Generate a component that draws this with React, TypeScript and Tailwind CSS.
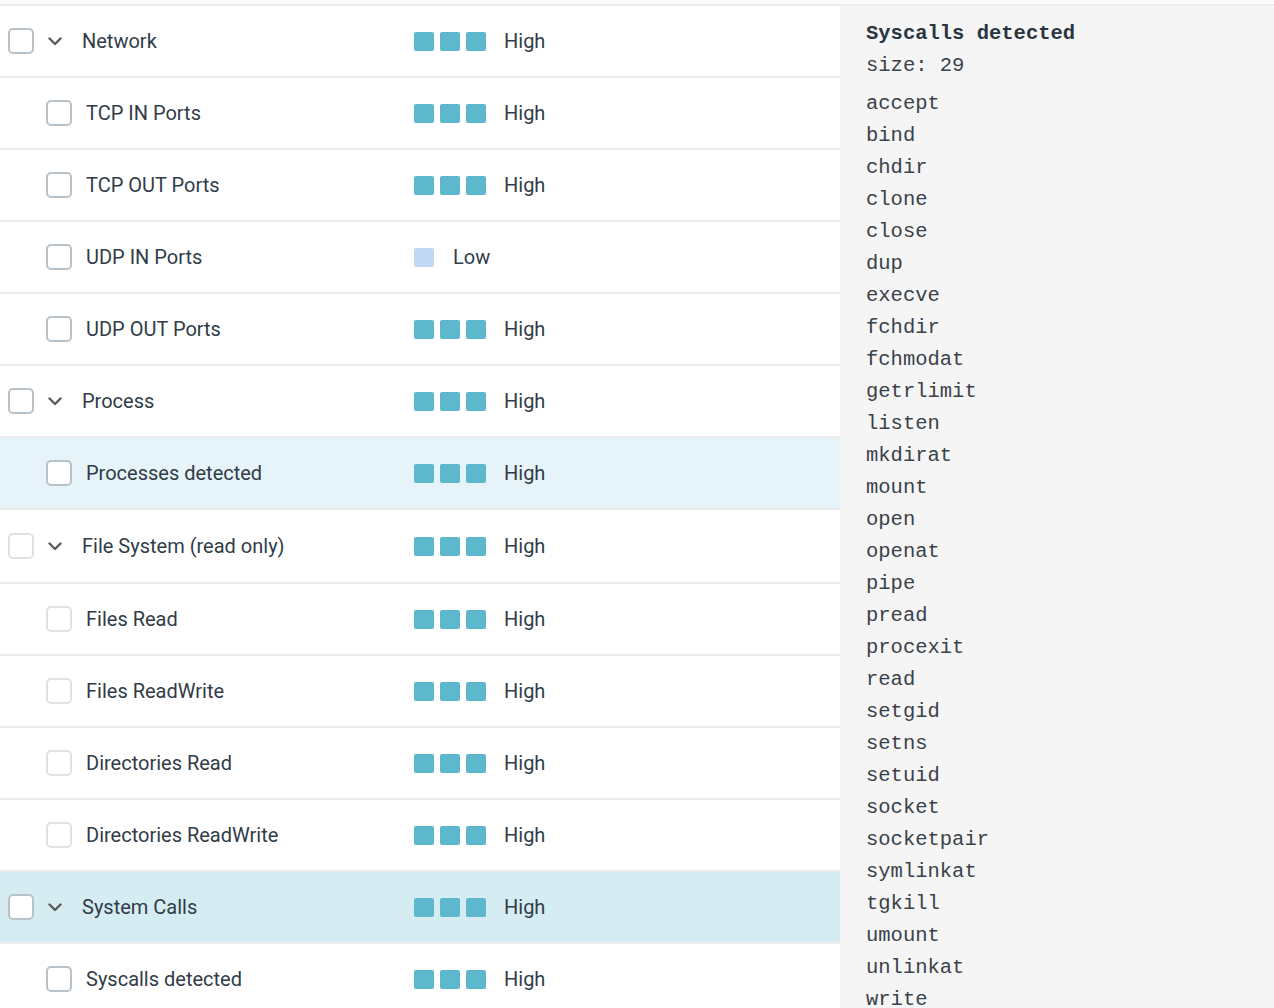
import React from "react";

type Row = {
  name: string;
  level: "High" | "Low";
  parent?: boolean;
  light?: boolean;
  bg?: string;
  tall?: boolean;
};

const rows: Row[] = [
  { name: "Network", level: "High", parent: true },
  { name: "TCP IN Ports", level: "High" },
  { name: "TCP OUT Ports", level: "High" },
  { name: "UDP IN Ports", level: "Low" },
  { name: "UDP OUT Ports", level: "High" },
  { name: "Process", level: "High", parent: true },
  { name: "Processes detected", level: "High", bg: "bg-[#e6f3f8]" },
  { name: "File System (read only)", level: "High", parent: true, light: true, tall: true },
  { name: "Files Read", level: "High", light: true },
  { name: "Files ReadWrite", level: "High", light: true },
  { name: "Directories Read", level: "High", light: true },
  { name: "Directories ReadWrite", level: "High", light: true },
  { name: "System Calls", level: "High", parent: true, bg: "bg-[#d4ecf2]" },
  { name: "Syscalls detected", level: "High" },
];

const syscalls = [
  "accept", "bind", "chdir", "clone", "close", "dup", "execve", "fchdir", "fchmodat",
  "getrlimit", "listen", "mkdirat", "mount", "open", "openat", "pipe", "pread",
  "procexit", "read", "setgid", "setns", "setuid", "socket", "socketpair",
  "symlinkat", "tgkill", "umount", "unlinkat", "write",
];

function Checkbox({ light }: { light?: boolean }) {
  return (
    <div
      className={
        "w-[26px] h-[26px] shrink-0 rounded-[5px] border-2 bg-white " +
        (light ? "border-[#dde2e6]" : "border-[#b7c2ca]")
      }
    />
  );
}

function Chevron() {
  return (
    <svg width="14" height="9" viewBox="0 0 14 9" className="shrink-0">
      <polyline
        points="1.5,1.5 7,7 12.5,1.5"
        fill="none"
        stroke="#5a5a5a"
        strokeWidth="2.4"
        strokeLinecap="round"
        strokeLinejoin="round"
      />
    </svg>
  );
}

function Level({ level }: { level: "High" | "Low" }) {
  if (level === "Low") {
    return (
      <div className="flex items-center">
        <div className="w-[20px] h-[19px] rounded-[2px] bg-[#c2d7f3]" />
        <span className="ml-[19px]">Low</span>
      </div>
    );
  }
  return (
    <div className="flex items-center">
      <div className="flex gap-[6px]">
        <div className="w-[20px] h-[19px] rounded-[2px] bg-[#5db8cd]" />
        <div className="w-[20px] h-[19px] rounded-[2px] bg-[#5db8cd]" />
        <div className="w-[20px] h-[19px] rounded-[2px] bg-[#5db8cd]" />
      </div>
      <span className="ml-[18px]">High</span>
    </div>
  );
}

export default function App() {
  return (
    <div
      className="w-[1274px] h-[1008px] overflow-hidden bg-white text-[#313c48]"
      style={{ fontFamily: "Roboto, 'Liberation Sans', sans-serif" }}
    >
      <div className="h-[4px] bg-[#fafafa]" />
      <div className="h-[2px] bg-[#ececec]" />
      <div className="flex">
        <div className="w-[840px] shrink-0">
          {rows.map((r) => (
            <div key={r.name} className="border-b-2 border-[#ededed]">
              <div
                className={
                  "flex items-center text-[20px] " +
                  (r.tall ? "h-[72px] " : "h-[70px] ") +
                  (r.bg ?? "")
                }
              >
                <div className="w-[414px] shrink-0 flex items-center">
                  {r.parent ? (
                    <>
                      <div className="ml-[8px]">
                        <Checkbox light={r.light} />
                      </div>
                      <div className="ml-[14px]">
                        <Chevron />
                      </div>
                      <span className="ml-[20px]">{r.name}</span>
                    </>
                  ) : (
                    <>
                      <div className="ml-[46px]">
                        <Checkbox light={r.light} />
                      </div>
                      <span className="ml-[14px]">{r.name}</span>
                    </>
                  )}
                </div>
                <Level level={r.level} />
              </div>
            </div>
          ))}
        </div>
        <div
          className="flex-1 bg-[#f5f5f5] pl-[26px] pt-[12px] text-[20.5px] leading-[32px] text-[#3a4249]"
          style={{ fontFamily: "'Liberation Mono', 'DejaVu Sans Mono', monospace" }}
        >
          <div className="font-bold text-[#2a3540]">Syscalls detected</div>
          <div>size: 29</div>
          <div className="mt-[6px]">
            {syscalls.map((s) => (
              <div key={s}>{s}</div>
            ))}
          </div>
        </div>
      </div>
    </div>
  );
}
